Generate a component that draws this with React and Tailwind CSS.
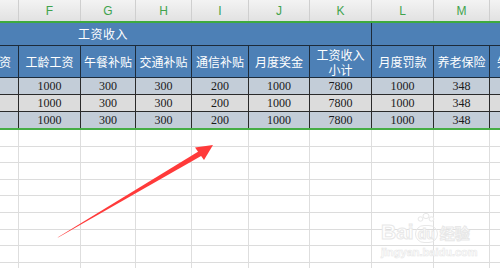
import React from "react";

const cols = [
  { w: "w-[19px]", letter: "", head: "资", partial: "left" },
  { w: "w-[62px]", letter: "F", head: "工龄工资", value: "1000" },
  { w: "w-[55px]", letter: "G", head: "午餐补贴", value: "300" },
  { w: "w-[56px]", letter: "H", head: "交通补贴", value: "300" },
  { w: "w-[57px]", letter: "I", head: "通信补贴", value: "200" },
  { w: "w-[61px]", letter: "J", head: "月度奖金", value: "1000" },
  { w: "w-[62px]", letter: "K", head: ["工资收入", "小计"], value: "7800" },
  { w: "w-[62px]", letter: "L", head: "月度罚款", value: "1000" },
  { w: "w-[56px]", letter: "M", head: "养老保险", value: "348" },
  { w: "w-[10px]", letter: "", head: "失", partial: "right" },
];

const dataRows = [
  { h: "h-[17px]", bg: "bg-[#c3cdd8]", last: false },
  { h: "h-[17px]", bg: "bg-[#dcdcdc]", last: false },
  { h: "h-[16px]", bg: "bg-[#c3cdd8]", last: true },
];

const emptyRows = ["h-[17px]", "h-[16px]", "h-[17px]", "h-[16px]", "h-[17px]", "h-[17px]", "h-[16px]", "h-[17px]", "h-[8px]"];

const cjk = "font-['Noto_Sans_CJK_SC','Noto_Sans',sans-serif]";

const ColumnHeader = () => (
  <div className="flex h-[21px] bg-gradient-to-b from-[#f3f3f3] to-[#e2e2e2]">
    {cols.map((c, i) => (
      <div
        key={i}
        className={`${c.w} shrink-0 flex items-center justify-center border-r border-[#cfcfcf] font-['Liberation_Sans',sans-serif] text-[12px] text-[#3fa34d] last:border-r-0`}
      >
        {c.letter}
      </div>
    ))}
  </div>
);

const HeadCell = ({ c }) => {
  if (c.partial === "left") {
    return (
      <div className={`${c.w} shrink-0 flex items-center justify-end overflow-hidden border-r border-[#1d2b3a] pr-[7px]`}>
        <span className="whitespace-nowrap">{c.head}</span>
      </div>
    );
  }
  if (c.partial === "right") {
    return (
      <div className={`${c.w} shrink-0 flex items-center overflow-hidden pl-[7px]`}>
        <span className="whitespace-nowrap">{c.head}</span>
      </div>
    );
  }
  return (
    <div className={`${c.w} shrink-0 flex flex-col items-center justify-center border-r border-[#1d2b3a]`}>
      {Array.isArray(c.head) ? (
        c.head.map((t) => (
          <span key={t} className="block leading-[15px]">
            {t}
          </span>
        ))
      ) : (
        <span>{c.head}</span>
      )}
    </div>
  );
};

const Sheet = () => (
  <div className="flex flex-col">
    <ColumnHeader />
    <div className="h-[2px] bg-[#3eaa3e]" />

    {/* merged group header */}
    <div className={`flex h-[23px] bg-[#4d80b6] border-b border-[#1d2b3a] text-white text-[12px] ${cjk}`}>
      <div className="w-[372px] shrink-0 flex items-center pl-[78px] tracking-[0.5px] border-r border-[#1d2b3a]">
        工资收入
      </div>
      <div className="flex-1" />
    </div>

    {/* field titles */}
    <div className={`flex h-[32px] bg-[#4d80b6] border-b border-[#1d2b3a] text-white text-[12px] ${cjk}`}>
      {cols.map((c, i) => (
        <HeadCell key={i} c={c} />
      ))}
    </div>

    {dataRows.map((r, ri) => (
      <div
        key={ri}
        className={`flex ${r.h} ${r.bg} ${r.last ? "" : "border-b border-[#2a2a2a]"} font-['Liberation_Serif',serif] text-[12px] text-[#1a1a1a]`}
      >
        {cols.map((c, i) => (
          <div
            key={i}
            className={`${c.w} shrink-0 flex items-center justify-center ${c.partial === "right" ? "" : "border-r border-[#2a2a2a]"}`}
          >
            {c.value}
          </div>
        ))}
      </div>
    ))}
    <div className="h-[2px] bg-[#45ad45]" />

    {emptyRows.map((h, ri) => (
      <div key={ri} className={`flex ${h} bg-white ${ri < emptyRows.length - 1 ? "border-b border-[#dcdcdc]" : ""}`}>
        {cols.map((c, i) => (
          <div key={i} className={`${c.w} shrink-0 ${c.partial === "right" ? "" : "border-r border-[#dedede]"}`} />
        ))}
      </div>
    ))}
  </div>
);

const Arrow = () => (
  <svg className="absolute inset-0 pointer-events-none" width="500" height="268" viewBox="0 0 500 268">
    <polygon points="57.5,237.5 58.6,237.2 202.4,155.3 199.6,150.7" fill="#ff3a3a" />
    <polygon points="213,145 195,147.5 204,160" fill="#ff3a3a" />
  </svg>
);

const Watermark = () => (
  <div className="absolute left-[381px] top-[211px] flex flex-col items-start pointer-events-none">
    <div className="flex items-end h-[32px]">
      <span className="font-['Liberation_Sans',sans-serif] font-bold text-[21px] leading-[22px] text-white [-webkit-text-stroke:1px_#e8e8e8]">
        Bai
      </span>
      <div className="flex flex-col items-center ml-[1px]">
        <svg width="18" height="12" viewBox="0 0 18 12">
          <ellipse cx="9" cy="3" rx="3" ry="2.6" fill="white" stroke="#e8e8e8" />
          <ellipse cx="3.5" cy="6" rx="2.4" ry="2.2" fill="white" stroke="#e8e8e8" />
          <ellipse cx="14.5" cy="6" rx="2.4" ry="2.2" fill="white" stroke="#e8e8e8" />
        </svg>
        <span className="rounded-full border border-[#e8e8e8] px-[2px] font-['Liberation_Sans',sans-serif] font-bold text-[14px] leading-[16px] text-white [-webkit-text-stroke:1px_#e8e8e8]">
          du
        </span>
      </div>
      <span className={`${cjk} font-bold text-[15px] leading-[20px] ml-[2px] text-white [-webkit-text-stroke:1px_#e8e8e8]`}>
        经验
      </span>
    </div>
    <span className="font-['Liberation_Sans',sans-serif] font-bold text-[11px] leading-[14px] mt-[2px] text-white [-webkit-text-stroke:0.6px_#e8e8e8]">
      jingyan.baidu.com
    </span>
  </div>
);

export default function App() {
  return (
    <div className="relative w-[500px] h-[268px] overflow-hidden bg-white">
      <Sheet />
      <Arrow />
      <Watermark />
    </div>
  );
}
